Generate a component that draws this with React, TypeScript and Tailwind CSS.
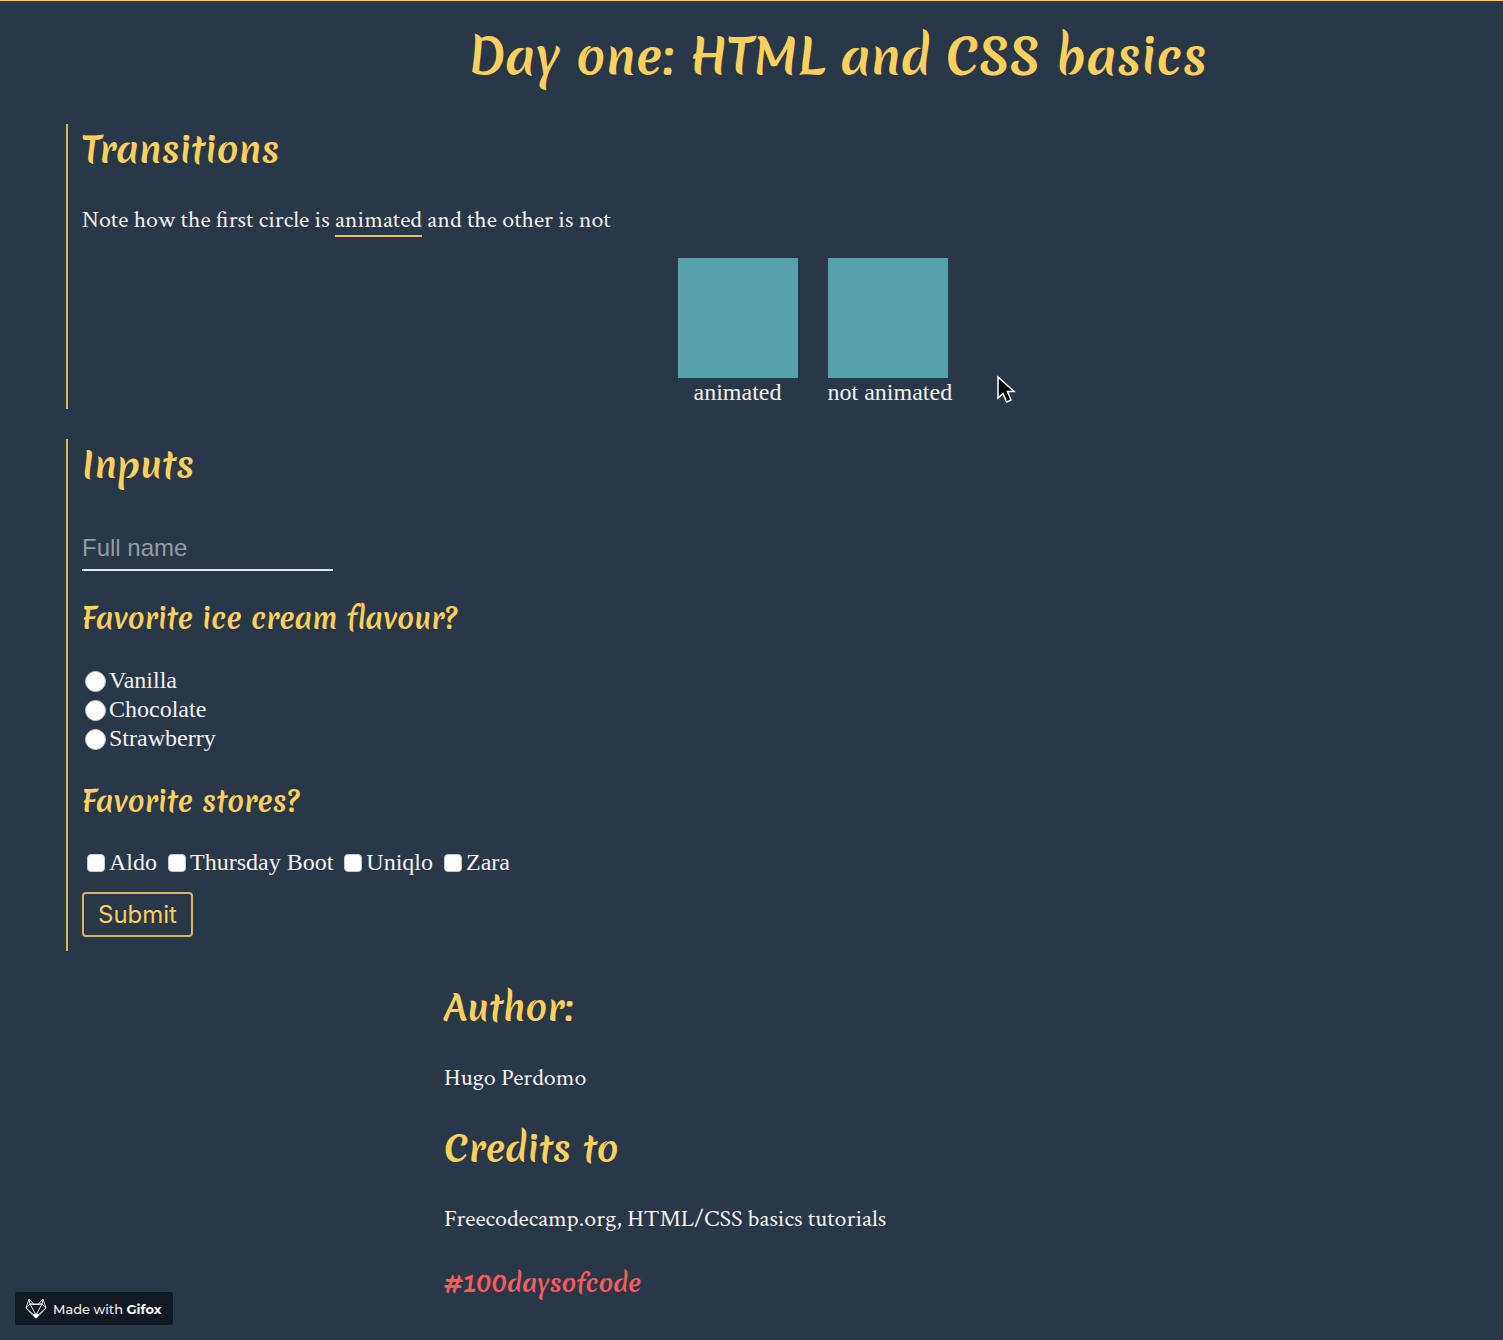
import type { ReactNode } from 'react';

const flavours = ['Vanilla', 'Chocolate', 'Strawberry'];
const stores = ['Aldo', 'Thursday Boot', 'Uniqlo', 'Zara'];

function SectionTitle({ children }: { children: ReactNode }) {
  return (
    <h2 className="font-[Merienda,Lato,sans-serif] text-4xl leading-[50px] font-bold text-[#fdcf5c]">
      {children}
    </h2>
  );
}

function Question({ children }: { children: ReactNode }) {
  return (
    <legend className="font-[Merienda,Lato,sans-serif] text-[28px] leading-10 font-bold text-[#fdcf5c]">
      {children}
    </legend>
  );
}

function Paragraph({ children }: { children: ReactNode }) {
  return <p className="mt-8 font-['Crimson_Text','Liberation_Serif',serif]">{children}</p>;
}

function GifoxBadge() {
  return (
    <div className="fixed bottom-[15px] left-[15px] flex h-[33px] items-center gap-1.5 rounded-xs bg-[#111a22] pr-3 pl-2.5 font-[Montserrat,Lato,sans-serif] text-[13px] font-medium whitespace-nowrap text-[#eceef0]">
      <svg width="22" height="21" viewBox="0 0 22 21" fill="none" stroke="#dfe3e6" strokeWidth="1" strokeLinejoin="round" aria-hidden="true">
        <path d="M4 1 1 10l7 7.500M18 1l3 9-7 7.500M4 1l5 5.500h4L18 1M1 10l4-4 4 .5M21 10l-4-4-4 .5M4 1l1 5 6 11 6-11 1-5M5 6l12 0M1 10l8 7M21 10l-8 7" />
        <path d="M8 16.500 11 16l3 .5-1.500 2.500L11 20l-1.500-1Z" fill="#ffffff" />
      </svg>
      <span>
        Made with <strong className="font-bold text-white">Gifox</strong>
      </span>
    </div>
  );
}

export default function App() {
  return (
    <div className="min-h-screen overflow-x-hidden border-t border-[#fdcf5c] bg-[#283848] font-['Liberation_Serif',serif] text-2xl leading-7 text-[#f7f0f0]">
      <header className="pt-5 pl-[172px] text-center">
        <h1 className="font-[Merienda,Lato,sans-serif] text-5xl leading-[70px] font-bold text-[#fdcf5c]">
          Day one: HTML and CSS basics
        </h1>
      </header>

      <main className="mt-[33px] ml-[66px] flex flex-col gap-[30px]">
        <section className="border-l-2 border-[#d9b558] pl-3.5">
          <SectionTitle>Transitions</SectionTitle>
          <Paragraph>
            Note how the first circle is <span className="border-b-2 border-[#e8c05a]">animated</span> and the other is not
          </Paragraph>
          <div className="relative mt-6 flex justify-center gap-[30px] pl-[45px]">
            <figure className="w-[120px]">
              <div className="h-[120px] bg-[#54a0ab]" />
              <figcaption className="h-[31px] text-center">animated</figcaption>
            </figure>
            <figure className="w-[125px]">
              <div className="h-[120px] w-[120px] bg-[#54a0ab]" />
              <figcaption className="whitespace-nowrap">not animated</figcaption>
            </figure>
            <svg className="absolute bottom-1 left-[914px]" width="20" height="30" viewBox="0 0 20 30" aria-hidden="true">
              <path d="M2 2v21l5-4.500 3.500 8.500 4.500-2-3.500-8.500H18Z" fill="#000" stroke="#fff" strokeWidth="1.500" />
            </svg>
          </div>
        </section>

        <section className="border-l-2 border-[#d9b558] pb-3.5 pl-3.5">
          <SectionTitle>Inputs</SectionTitle>
          <form onSubmit={(e) => e.preventDefault()}>
            <input
              type="text"
              aria-label="Full name"
              placeholder="Full name"
              className="mt-9 block h-[46px] w-[251px] border-b-2 border-[#e8e6e8] bg-transparent pt-0.5 font-['Liberation_Sans',sans-serif] outline-none placeholder:text-[#959ba3]"
            />
            <fieldset className="mt-7">
              <Question>Favorite ice cream flavour?</Question>
              <div className="mt-[26px]">
                {flavours.map((name) => (
                  <label key={name} className="flex h-[29px] w-fit items-center">
                    <input
                      type="radio"
                      name="flavour"
                      className="mx-[3px] mt-1 size-[21px] appearance-none rounded-full border border-[#c5c7ca] bg-white checked:border-[6px] checked:border-[#54a0ab]"
                    />
                    {name}
                  </label>
                ))}
              </div>
            </fieldset>
            <fieldset className="mt-[30px]">
              <Question>Favorite stores?</Question>
              <div className="mt-[26px] flex flex-wrap gap-1.5">
                {stores.map((name) => (
                  <label key={name} className="flex items-center">
                    <input
                      type="checkbox"
                      className="mt-0.5 mr-1 ml-[5px] size-[18px] appearance-none rounded-sm border border-[#c5c7ca] bg-white checked:bg-[#54a0ab]"
                    />
                    {name}
                  </label>
                ))}
              </div>
            </fieldset>
            <button
              type="submit"
              className="mt-4 h-[45px] rounded-sm border-2 border-[#d9b558] px-3.5 font-[Inter,sans-serif] text-[#fdcf5c]"
            >
              Submit
            </button>
          </form>
        </section>
      </main>

      <footer className="mt-[31px] ml-[444px]">
        <SectionTitle>Author:</SectionTitle>
        <Paragraph>Hugo Perdomo</Paragraph>
        <div className="mt-[31px]">
          <SectionTitle>Credits to</SectionTitle>
        </div>
        <Paragraph>Freecodecamp.org, HTML/CSS basics tutorials</Paragraph>
        <h3 className="mt-8 font-[Merienda,Lato,sans-serif] text-2xl leading-9 font-bold text-[#fb5b5d]">
          #100daysofcode
        </h3>
      </footer>

      <GifoxBadge />
    </div>
  );
}
